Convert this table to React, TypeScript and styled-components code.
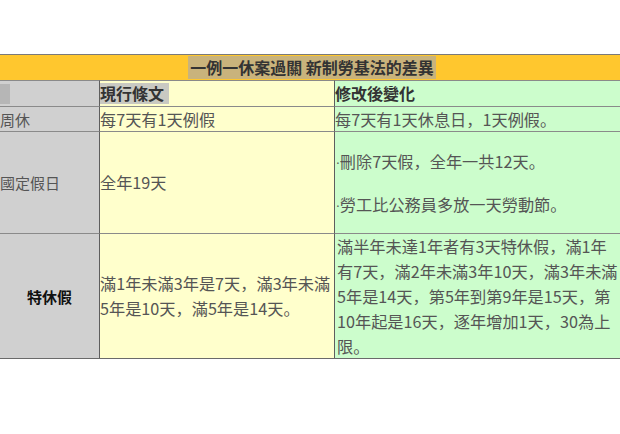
import styled, {createGlobalStyle} from 'styled-components';

const Global = createGlobalStyle`
    html, body {
        margin: 0;
        background: #fff;
    }
    body {
        font-family: "Noto Sans CJK JP", "DejaVu Sans", sans-serif;
        font-size: 16.2px;
        color: #555;
    }
`;

const Page = styled.div`
    width: 620px;
    height: 434px;
    padding-top: 54px;
    box-sizing: border-box;
    overflow: hidden;
`;

const TitleBar = styled.div`
    height: 26px;
    box-sizing: border-box;
    display: flex;
    align-items: center;
    justify-content: center;
    padding-left: 4px;
    background: #ffc72e;
    border-top: 1px solid #7a7a7a;
`;

const TitleText = styled.span`
    background: #c9b37c;
    color: #333;
    font-size: 16px;
    font-weight: bold;
    line-height: 23px;
    padding: 0 2px;
    white-space: nowrap;
`;

const Grid = styled.div`
    display: grid;
    grid-template-columns: 100px 235px 1fr;
    grid-template-rows: 26px 25px 102px 125px;
    border-bottom: 1px solid #6a6a6a;
`;

const tones = {
    gray: '#d0d0d0',
    yellow: '#ffffcc',
    green: '#ccfdcc',
};

const Cell = styled.div<{$tone: keyof typeof tones; $center?: boolean; $pad?: number}>`
    background: ${p => tones[p.$tone]};
    border-top: 1px solid #8a8a8a;
    border-right: 1px solid #5e5e5e;
    display: flex;
    flex-direction: column;
    justify-content: center;
    align-items: ${p => (p.$center ? 'center' : 'flex-start')};
    padding-left: ${p => p.$pad ?? 0}px;
    font-size: ${p => (p.$tone === 'gray' ? '15px' : 'inherit')};
    line-height: 25px;
    white-space: nowrap;
    min-width: 0;
    &:nth-child(3n) {
        border-right: none;
    }
`;

const HeadMark = styled.span`
    align-self: flex-start;
    width: 10px;
    height: 20px;
    background: #b6b6b6;
`;

const HeadText = styled.span<{$boxed?: boolean}>`
    font-size: 16px;
    font-weight: bold;
    color: #333;
    line-height: 21px;
    padding-right: ${p => (p.$boxed ? '5px' : '0')};
    background: ${p => (p.$boxed ? '#c9c9c2' : 'transparent')};
`;

const Bold = styled.span`
    font-weight: bold;
    color: #111;
`;

const Notes = styled.div`
    display: flex;
    flex-direction: column;
    gap: 18px;
`;

const Dot = styled.span`
    font-family: "DejaVu Sans", sans-serif;
    font-size: 12px;
    line-height: 1;
`;

export default function App() {
    return (
        <Page>
            <Global />
            <TitleBar>
                <TitleText>一例一休案過關 新制勞基法的差異</TitleText>
            </TitleBar>
            <Grid>
                <Cell $tone="gray">
                    <HeadMark />
                </Cell>
                <Cell $tone="yellow">
                    <HeadText $boxed>現行條文</HeadText>
                </Cell>
                <Cell $tone="green">
                    <HeadText>修改後變化</HeadText>
                </Cell>

                <Cell $tone="gray">周休</Cell>
                <Cell $tone="yellow">每7天有1天例假</Cell>
                <Cell $tone="green">每7天有1天休息日，1天例假。</Cell>

                <Cell $tone="gray">國定假日</Cell>
                <Cell $tone="yellow">全年19天</Cell>
                <Cell $tone="green" $pad={1}>
                    <Notes>
                        <span><Dot>·</Dot>刪除7天假，全年一共12天。</span>
                        <span><Dot>·</Dot>勞工比公務員多放一天勞動節。</span>
                    </Notes>
                </Cell>

                <Cell $tone="gray" $center>
                    <Bold>特休假</Bold>
                </Cell>
                <Cell $tone="yellow">
                    <span>滿1年未滿3年是7天，滿3年未滿</span>
                    <span>5年是10天，滿5年是14天。</span>
                </Cell>
                <Cell $tone="green" $pad={2}>
                    <span>滿半年未達1年者有3天特休假，滿1年</span>
                    <span>有7天，滿2年未滿3年10天，滿3年未滿</span>
                    <span>5年是14天，第5年到第9年是15天，第</span>
                    <span>10年起是16天，逐年增加1天，30為上</span>
                    <span>限。</span>
                </Cell>
            </Grid>
        </Page>
    );
}
